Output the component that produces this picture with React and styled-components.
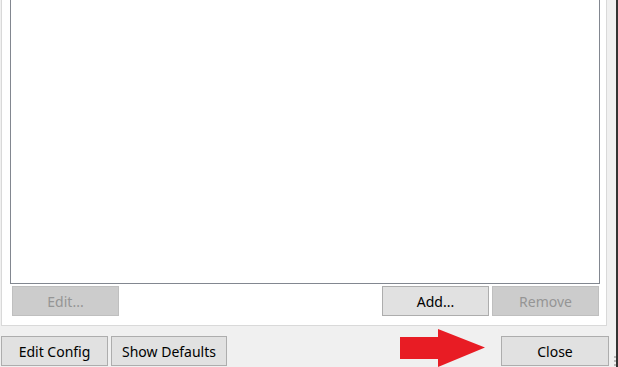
import React from "react";
import styled, { createGlobalStyle } from "styled-components";

const colors = {
  window: "#f0f0f0",
  panel: "#ffffff",
  panelBorder: "#d9d9d9",
  listBorder: "#828790",
  btn: "#e1e1e1",
  btnBorder: "#adadad",
  btnDisabled: "#cccccc",
  btnDisabledBorder: "#bfbfbf",
  textDisabled: "#959595",
  arrow: "#e81c24",
};

function App() {
  return (
    <>
      <GlobalStyle />
      <Window>
        <TabPage>
          <ListBox />
          <ListActions>
            <Button disabled>Edit...</Button>
            <Spacer />
            <Button>Add...</Button>
            <Button disabled>Remove</Button>
          </ListActions>
        </TabPage>
        <Footer>
          <Button $w={107}>Edit Config</Button>
          <Button $w={116}>Show Defaults</Button>
          <Spacer />
          <Arrow width="85" height="38" viewBox="0 0 85 38">
            <polygon points="0,8 38,8 38,0 85,18.5 38,38 38,30 0,30" fill={colors.arrow} />
          </Arrow>
          <Button $w={108}>Close</Button>
          <Grip>
            <i />
            <i />
            <i />
          </Grip>
        </Footer>
      </Window>
    </>
  );
}

export default App;

const GlobalStyle = createGlobalStyle`
  html, body {
    margin: 0;
    padding: 0;
    background: ${colors.window};
  }
  * {
    box-sizing: border-box;
  }
`;

const Window = styled.div`
  width: 618px;
  height: 367px;
  display: flex;
  flex-direction: column;
  background: ${colors.window};
  border-right: 2px solid #333333;
  font-family: "Noto Sans", "Open Sans", sans-serif;
  font-size: 14px;
  color: #000;
  overflow: hidden;
`;

const TabPage = styled.div`
  margin-left: 1px;
  width: 606px;
  height: 326px;
  background: ${colors.panel};
  border: 1px solid ${colors.panelBorder};
  border-top: none;
  padding: 0 6px 0 8px;
  display: flex;
  flex-direction: column;
`;

const ListBox = styled.div`
  height: 284px;
  background: #fff;
  border: 1px solid ${colors.listBorder};
  border-top: none;
`;

const ListActions = styled.div`
  display: flex;
  gap: 3px;
  margin-top: 2px;
  padding: 0 1px 0 2px;
`;

const Spacer = styled.div`
  flex: 1;
`;

const Button = styled.button`
  width: ${(p) => p.$w || 107}px;
  height: 30px;
  padding: 0;
  display: flex;
  align-items: center;
  justify-content: center;
  font: inherit;
  color: #000;
  background: ${colors.btn};
  border: 1px solid ${colors.btnBorder};
  border-radius: 0;
  &:disabled {
    background: ${colors.btnDisabled};
    border-color: ${colors.btnDisabledBorder};
    color: ${colors.textDisabled};
  }
`;

const Footer = styled.div`
  flex: 1;
  display: flex;
  align-items: flex-end;
  gap: 3px;
  padding: 0 0 1px 1px;
`;

const Arrow = styled.svg`
  display: block;
  margin-bottom: -1px;
  margin-right: 13px;
`;

const Grip = styled.div`
  width: 7px;
  height: 10px;
  display: flex;
  flex-direction: column;
  align-items: flex-end;
  justify-content: flex-end;
  gap: 2px;
  margin-left: -3px;

  i {
    display: block;
    width: 2px;
    height: 2px;
    background: #b8b8b8;
  }
`;
